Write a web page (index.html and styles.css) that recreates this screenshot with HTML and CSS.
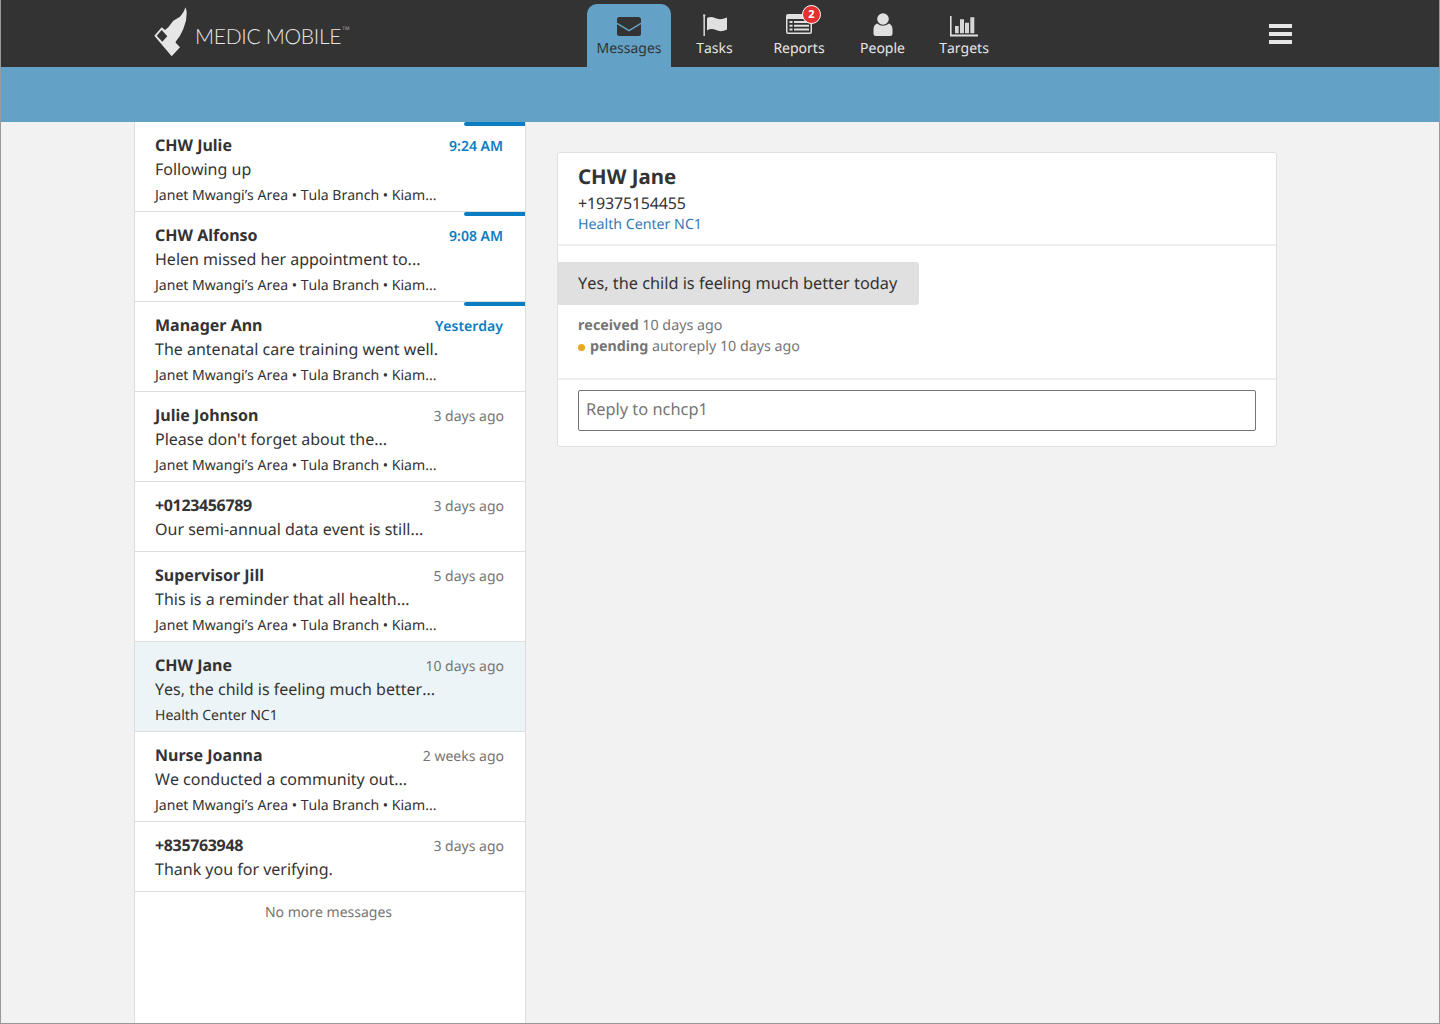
FILE: index.html
```html
<!DOCTYPE html>
<html>

<head>
    <meta name="viewport" content="width=device-width, initial-scale=1.0">
    <title>Messages</title>
    <link rel="stylesheet" href="styles.css">
</head>

<body>
    <header class="header">
        <div class="logo">
            <svg class="logo-mark" width="36" height="52" viewBox="0 0 36 52">
                <path d="M1.300 29.700 L8.700 21.300 L12 24 L15.300 21.300 L20.300 14.700 L27 10.700 L30.300 6.300 L32.700 1.300 L33.700 6.300 L33 14.700 L30.300 23 L27 29.700 L23 35.300 L22.500 36.500 L27 41.300 L18.700 50.300 Z" fill="#e6e6e6"/>
                <path d="M3.700 29.700 L8.700 24 L14.300 30.300 L9.300 35.700 Z" fill="#333333"/>
            </svg>
            <span class="logo-text">MEDIC MOBILE</span><span class="logo-tm">TM</span>
        </div>
        <nav class="tabs">
            <a class="tab selected">
                <svg width="24" height="24" viewBox="0 0 24 24">
                    <rect x="0" y="4" width="24" height="19" rx="2.500" fill="#333333"/>
                    <path d="M0 10.300 L12 17.700 L24 10.300" fill="none" stroke="#63a2c6" stroke-width="1.500"/>
                </svg>
                <span>Messages</span>
            </a>
            <a class="tab tab-tasks">
                <svg width="24" height="24" viewBox="0 0 24 24">
                    <circle cx="1.200" cy="2.500" r="1.200" fill="#d0d0d0"/>
                    <path d="M0.400 2.500 H2 V23 H0.400 Z" fill="#d0d0d0"/>
                    <path d="M4 5 Q8 3 12 5 Q17 7.500 24 4.500 V16.500 Q18 19.500 13 17 Q8 15 4 17.500 Z" fill="#e0e0e0"/>
                </svg>
                <span>Tasks</span>
            </a>
            <a class="tab tab-reports">
                <svg width="26" height="24" viewBox="0 0 26 24">
                    <path d="M2 1 H24 Q26 1 26 3 V19 Q26 21 24 21 H2 Q0 21 0 19 V3 Q0 1 2 1 Z" fill="#e0e0e0"/>
                    <path d="M1.500 6 H24.500 V19.500 H1.500 Z" fill="#333333"/>
                    <path d="M3.500 8 H6.500 V10 H3.500 Z M8 8 H23 V10 H8 Z M3.500 11.700 H6.500 V13.700 H3.500 Z M8 11.700 H23 V13.700 H8 Z M3.500 15.400 H6.500 V17.400 H3.500 Z M8 15.400 H23 V17.400 H8 Z" fill="#e0e0e0"/>
                </svg>
                <b class="badge">2</b>
                <span>Reports</span>
            </a>
            <a class="tab tab-people">
                <svg width="20" height="24" viewBox="0 0 20 24">
                    <circle cx="10" cy="6" r="5.800" fill="#e0e0e0"/>
                    <path d="M4 10.500 Q10 15 16 10.500 Q19.500 12 19.500 16.500 V20.500 Q19.500 23 17 23 H3 Q0.500 23 0.500 20.500 V16.500 Q0.500 12 4 10.500 Z" fill="#e0e0e0"/>
                </svg>
                <span>People</span>
            </a>
            <a class="tab tab-targets">
                <svg width="28" height="24" viewBox="0 0 28 24">
                    <path d="M0 3 H1.600 V21.500 H28 V23.500 H0 Z" fill="#e0e0e0"/>
                    <path d="M5 13 H8.700 V20.300 H5 Z M10 6.300 H14 V20.300 H10 Z M15 9.700 H19 V20.300 H15 Z M20.300 4.300 H24.300 V20.300 H20.300 Z" fill="#d6d6d6"/>
                </svg>
                <span>Targets</span>
            </a>
        </nav>
        <div class="hamburger"><i></i><i></i><i></i></div>
    </header>
    <div class="band"></div>
    <main class="content">
        <section class="list">
            <div class="row unread">
                <div class="top"><b>CHW Julie</b><time>9:24 AM</time></div>
                <p class="msg">Following up</p>
                <p class="place">Janet Mwangi’s Area • Tula Branch • Kiam...</p>
            </div>
            <div class="row unread">
                <div class="top"><b>CHW Alfonso</b><time>9:08 AM</time></div>
                <p class="msg">Helen missed her appointment to...</p>
                <p class="place">Janet Mwangi’s Area • Tula Branch • Kiam...</p>
            </div>
            <div class="row unread">
                <div class="top"><b>Manager Ann</b><time>Yesterday</time></div>
                <p class="msg">The antenatal care training went well.</p>
                <p class="place">Janet Mwangi’s Area • Tula Branch • Kiam...</p>
            </div>
            <div class="row">
                <div class="top"><b>Julie Johnson</b><time>3 days ago</time></div>
                <p class="msg">Please don't forget about the...</p>
                <p class="place">Janet Mwangi’s Area • Tula Branch • Kiam...</p>
            </div>
            <div class="row">
                <div class="top"><b class="num">+0123456789</b><time>3 days ago</time></div>
                <p class="msg">Our semi-annual data event is still...</p>
            </div>
            <div class="row">
                <div class="top"><b>Supervisor Jill</b><time>5 days ago</time></div>
                <p class="msg">This is a reminder that all health...</p>
                <p class="place">Janet Mwangi’s Area • Tula Branch • Kiam...</p>
            </div>
            <div class="row active">
                <div class="top"><b>CHW Jane</b><time>10 days ago</time></div>
                <p class="msg">Yes, the child is feeling much better...</p>
                <p class="place">Health Center NC1</p>
            </div>
            <div class="row">
                <div class="top"><b>Nurse Joanna</b><time>2 weeks ago</time></div>
                <p class="msg">We conducted a community out...</p>
                <p class="place">Janet Mwangi’s Area • Tula Branch • Kiam...</p>
            </div>
            <div class="row">
                <div class="top"><b class="num">+835763948</b><time>3 days ago</time></div>
                <p class="msg">Thank you for verifying.</p>
            </div>
            <p class="no-more">No more messages</p>
        </section>
        <section class="detail">
            <div class="card">
                <div class="card-head">
                    <h2>CHW Jane</h2>
                    <p class="phone">+19375154455</p>
                    <a class="link">Health Center NC1</a>
                </div>
                <div class="card-body">
                    <div class="bubble">Yes, the child is feeling much better today</div>
                    <p class="state"><b>received</b> 10 days ago</p>
                    <p class="state"><i class="dot"></i><b>pending</b> autoreply 10 days ago</p>
                </div>
                <div class="card-foot">
                    <div class="reply">Reply to nchcp1</div>
                </div>
            </div>
        </section>
    </main>
</body>

</html>
```

FILE: styles.css
```css
* {
    box-sizing: border-box;
}

html,
body {
    margin: 0;
    height: 1024px;
    overflow: hidden;
}

body {
    display: flex;
    flex-direction: column;
    border: 1px solid #999999;
    border-top: 0;
    font-family: "Noto Sans", sans-serif;
    font-kerning: none;
    color: #333333;
    background: #f2f2f2;
    text-rendering: geometricPrecision;
}

p,
h2 {
    margin: 0;
}

.header {
    display: flex;
    height: 67px;
    padding-left: 152px;
    background: #333333;
    flex-shrink: 0;
}

.logo {
    display: flex;
    width: 434px;
    padding-top: 6px;
    color: #e6e6e6;
}

.logo-mark {
    flex-shrink: 0;
}

.logo-text {
    margin: 17px 0 0 6px;
    font-family: Lato, sans-serif;
    font-size: 21px;
    line-height: 28px;
    font-weight: 300;
    letter-spacing: -0.3px;
}

.logo-tm {
    margin: 19px 0 0 1px;
    font-size: 5px;
    line-height: 8px;
    color: #aaaaaa;
}

.tabs {
    display: flex;
    gap: 14px;
    margin-top: 4px;
}

.tab {
    position: relative;
    display: flex;
    flex-direction: column;
    align-items: center;
    width: 84px;
    height: 63px;
    padding-top: 9px;
    border-radius: 10px 10px 0 0;
    font-size: 14px;
    line-height: 20px;
    color: #e6e6e6;
}

.tab span {
    margin-top: 2px;
}

.selected {
    background: #63a2c6;
    color: #333333;
}

.tab-tasks {
    width: 57px;
    margin-left: 1px;
}

.tab-reports {
    width: 72px;
    margin-left: 6px;
}

.tab-people {
    width: 65px;
    margin-left: 1px;
}

.tab-targets {
    width: 70px;
}

.badge {
    position: absolute;
    top: 1px;
    left: 39px;
    width: 19px;
    height: 19px;
    border: 1px solid #ffffff;
    border-radius: 50%;
    background: #e33030;
    color: #ffffff;
    font-size: 11px;
    line-height: 17px;
    font-weight: 700;
    text-align: center;
}

.hamburger {
    display: flex;
    flex-direction: column;
    gap: 4px;
    width: 23px;
    margin: 24px 0 0 270px;
}

.hamburger i {
    height: 4px;
    background: #e6e6e6;
}

.band {
    height: 55px;
    background: #63a2c6;
    flex-shrink: 0;
}

.content {
    display: flex;
    flex: 1;
    padding-left: 133px;
    min-height: 0;
}

.list {
    width: 392px;
    border-left: 1px solid #dddddd;
    border-right: 1px solid #dddddd;
    background: #ffffff;
}

.row {
    position: relative;
    padding: 12px 21px 0 20px;
    border-bottom: 1px solid #dddddd;
    height: 90px;
}

.row:nth-child(5),
.row:nth-child(9) {
    height: 70px;
}

.unread::before {
    content: "";
    position: absolute;
    top: 0;
    right: 0;
    width: 61px;
    height: 4px;
    border-radius: 2px 0 0 2px;
    background: #0a7dc2;
}

.active {
    background: #edf4f7;
}

.top {
    display: flex;
    justify-content: space-between;
    height: 22px;
    font-size: 16px;
    line-height: 22px;
}

.num {
    letter-spacing: -0.35px;
}

.top time {
    padding-top: 2px;
    font-size: 14px;
    color: #757575;
}

.unread time {
    margin-right: 1px;
    font-weight: 600;
    color: #0a7dc2;
}

.msg {
    margin-top: 2px;
    font-size: 16px;
    line-height: 22px;
}

.place {
    margin-top: 6px;
    font-size: 14.05px;
    line-height: 20px;
}

.no-more {
    margin-top: 11px;
    padding-right: 3px;
    text-align: center;
    font-size: 14px;
    line-height: 20px;
    color: #757575;
}

.detail {
    flex: 1;
    padding: 30px 0 0 31px;
}

.card {
    width: 720px;
    border: 1px solid #e0e0e0;
    border-radius: 3px;
    background: #ffffff;
}

.card-head {
    height: 93px;
    padding: 9px 20px 0;
    border-bottom: 2px solid #eeeeee;
}

h2 {
    font-size: 20.4px;
    line-height: 28px;
    font-weight: 700;
}

.phone {
    margin-top: 2px;
    font-size: 16px;
    line-height: 22px;
    letter-spacing: -0.17px;
}

.link {
    display: block;
    margin-top: 1px;
    font-size: 14.2px;
    line-height: 20px;
    color: #337ab7;
}

.card-body {
    height: 134px;
    padding-top: 16px;
    border-bottom: 2px solid #eeeeee;
}

.bubble {
    width: 361px;
    height: 43px;
    margin-bottom: 10px;
    padding: 0 20px;
    border-radius: 0 3px 3px 0;
    background: #e0e0e0;
    font-size: 16.3px;
    line-height: 43px;
}

.state {
    padding-left: 20px;
    font-size: 14.25px;
    line-height: 21px;
    color: #757575;
}

.dot {
    display: inline-block;
    width: 7px;
    height: 7px;
    margin-right: 5px;
    border-radius: 50%;
    background: #e9a820;
}

.card-foot {
    padding: 10px 20px 15px;
}

.reply {
    height: 41px;
    padding-left: 7px;
    border: 1px solid #757575;
    border-radius: 2px;
    font-size: 16.4px;
    line-height: 36px;
    color: #757575;
}
```
